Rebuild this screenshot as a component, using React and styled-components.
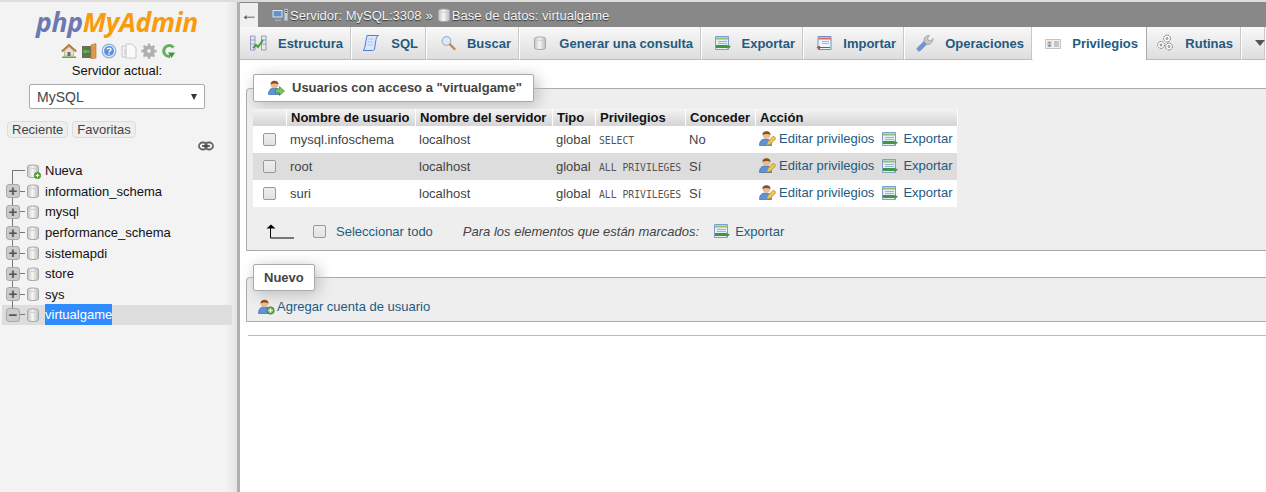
import React from "react"
import styled, { createGlobalStyle } from "styled-components"

const Global = createGlobalStyle`
  html, body {
    margin: 0;
    height: 100%;
    overflow: hidden;
    background: #fff;
  }
  body {
    font-family: "Liberation Sans", Arial, sans-serif;
    font-size: 13px;
    color: #444;
  }
`

const Page = styled.div`
  display: flex;
  height: 100vh;
  width: 100vw;
  overflow: hidden;
`

/* sidebar */

const Sidebar = styled.aside`
  box-sizing: border-box;
  flex: 0 0 240px;
  height: 100%;
  padding-top: 8px;
  background: linear-gradient(to right, #f3f3f3 0, #f3f3f3 226px, #e4e4e4 237px, #b0b0b0 237px, #b0b0b0 240px);
  border-top: 2px solid #ddd;
  display: flex;
  flex-direction: column;
`

const Logo = styled.div`
  align-self: center;
  margin-right: 6px;
  height: 25px;
  line-height: 25px;
  font-family: "Open Sans", sans-serif;
  font-style: italic;
  font-weight: 700;
  font-size: 26.5px;
  letter-spacing: -0.3px;
  color: #6c78af;

  span {
    color: #f89c0e;
  }
`

const QuickIcons = styled.div`
  display: flex;
  justify-content: center;
  gap: 4px;
  margin-top: 8px;
  margin-right: 3px;
  height: 16px;
`

const ServerLabel = styled.div`
  margin-top: 4px;
  margin-right: 6px;
  text-align: center;
  font-size: 13px;
  line-height: 16px;
  color: #111;
`

const Select = styled.div`
  box-sizing: border-box;
  display: flex;
  align-items: center;
  justify-content: space-between;
  width: 176px;
  height: 25px;
  margin: 5px 0 0 29px;
  padding: 0 7px;
  background: #fff;
  border: 1px solid #aaa;
  border-radius: 2px;
  font-size: 14px;
  color: #444;

  i {
    width: 0;
    height: 0;
    border-left: 3px solid transparent;
    border-right: 3px solid transparent;
    border-top: 6px solid #333;
  }
`

const Pills = styled.div`
  display: flex;
  gap: 4px;
  margin: 12px 0 0 7px;
`

const Pill = styled.div`
  padding: 0 4px;
  height: 15px;
  line-height: 15px;
  background: #eee;
  border: 1px solid #ddd;
  border-radius: 4px;
  font-size: 13px;
  color: #444;
`

const LinkRow = styled.div`
  display: flex;
  justify-content: flex-end;
  padding-right: 26px;
  height: 12px;
  margin-top: 3px;
`

const Tree = styled.ul`
  list-style: none;
  margin: 7.5px 0 0 2px;
  padding: 0;
  width: 230px;
`

const TreeRow = styled.li`
  position: relative;
  display: flex;
  align-items: center;
  height: 20.6px;
  background: ${(p) => (p.$active ? "#ddd" : "transparent")};

  /* vertical line of the tree */
  &::before {
    content: "";
    position: absolute;
    left: 10px;
    top: ${(p) => (p.$first ? "50%" : "0")};
    bottom: ${(p) => (p.$active ? "50%" : "0")};
    width: 1px;
    background: #777;
  }
`

const Expander = styled.div`
  position: relative;
  box-sizing: border-box;
  flex: 0 0 14px;
  width: 14px;
  height: 14px;
  margin-left: 4px;
  background: ${(p) => (p.$none ? "transparent" : "#ccc")};
  border: ${(p) => (p.$none ? "0" : "1px solid #aaa")};
  border-radius: 3px;
  display: flex;
  align-items: center;
  justify-content: center;
  color: #555;
  font-weight: 700;
  font-size: 15px;
  line-height: 10px;
`

const Elbow = styled.div`
  flex: 0 0 ${(p) => (p.$long ? "13px" : "5px")};
  height: 1px;
  background: #777;
  margin-left: ${(p) => (p.$long ? "-8px" : "0")};
`

const TreeLabel = styled.span`
  margin-left: 4px;
  font-size: 13px;
  line-height: 21px;
  color: ${(p) => (p.$active ? "#fff" : "#111")};
  background: ${(p) => (p.$active ? "#2f8cff" : "transparent")};
`

/* main area */

const Main = styled.main`
  flex: 1 1 0;
  min-width: 0;
  display: flex;
  flex-direction: column;
  border-top: 2px solid #ddd;
`

const Crumbs = styled.div`
  display: flex;
  align-items: center;
  height: 25px;
  background: #888;
  color: #f4f4f4;
  font-size: 13px;
  text-shadow: 0 1px 1px #333;
  border-top: 1px solid #888;
  box-sizing: border-box;
`

const BackButton = styled.div`
  flex: 0 0 18px;
  height: 100%;
  margin-right: 13px;
  background: #f0f0f0;
  color: #444;
  text-align: center;
  font-size: 18px;
  line-height: 22px;
  text-shadow: none;
`

const Crumb = styled.span`
  display: inline-flex;
  align-items: center;
  gap: ${(p) => p.$gap || 0}px;
  margin-right: ${(p) => p.$right || 4}px;
`

const Tabs = styled.nav`
  display: flex;
  height: 33px;
`

const Tab = styled.div`
  box-sizing: border-box;
  display: flex;
  align-items: center;
  justify-content: flex-end;
  gap: 11px;
  flex: 0 0 ${(p) => p.$w}px;
  padding-right: ${(p) => (p.$plain ? 0 : 8)}px;
  white-space: nowrap;
  background: ${(p) => (p.$active ? "#fff" : "linear-gradient(#f8f8f8, #dedede)")};
  border-right: 1px solid ${(p) => (p.$active ? "#aaa" : "#fff")};
  box-shadow: ${(p) => (p.$active ? "none" : "inset -1px 0 0 #c8c8c8")};
  border-bottom: ${(p) => (p.$active ? "0" : "1px solid #bbb")};
  color: #235a81;
  font-weight: 700;
  font-size: 13px;
`

const Content = styled.div`
  flex: 1 1 0;
  padding: 14px 0 0 6px;
  overflow: hidden;
  margin-right: -10px;
`

const Fieldset = styled.fieldset`
  margin: ${(p) => p.$top || 0}px 0 0;
  padding: ${(p) => p.$pad};
  background: #eee;
  border: 1px solid #aaa;
  border-radius: 4px 0 0 0;
  min-width: 0;
`

const Legend = styled.legend`
  box-sizing: border-box;
  display: flex;
  align-items: center;
  gap: 7px;
  height: ${(p) => p.$h || 28}px;
  padding: 0 ${(p) => p.$padRight || 11}px 1px ${(p) => p.$padLeft || 14}px;
  background: #fff;
  border: 1px solid #aaa;
  border-radius: 2px;
  box-shadow: 3px 3px 15px #bbb;
  color: #444;
  font-weight: 700;
  font-size: 13px;
`

const Table = styled.table`
  table-layout: fixed;
  border-collapse: collapse;
  width: 704px;
  font-size: 13px;
`

const Th = styled.th`
  height: 17px;
  padding: 0 0 0 4.5px;
  text-align: left;
  background: linear-gradient(#f3f3f3, #d4d4d4);
  border-right: 1px solid #fff;
  color: #111;
  font-weight: 700;
  font-size: 13px;
  line-height: 17px;
  white-space: nowrap;
  overflow: hidden;
`

const Row = styled.tr`
  height: 27px;
  background: ${(p) => (p.$even ? "#ddd" : "#fff")};
`

const Td = styled.td`
  padding: 0 0 0 4px;
  white-space: nowrap;
  overflow: hidden;
  color: #444;
`

const Priv = styled.code`
  font-family: "DejaVu Sans Mono", monospace;
  font-size: 9.75px;
  color: #555;
`

const Check = styled.input.attrs({ type: "checkbox" })`
  appearance: none;
  display: block;
  box-sizing: border-box;
  width: 13px;
  height: 13px;
  margin: 0 0 0 ${(p) => p.$left || 0}px;
  background: linear-gradient(#eee, #e2e2e2);
  border: 1px solid #999;
  border-radius: 2px;
`

const ActionLink = styled.a`
  display: inline-flex;
  align-items: center;
  gap: ${(p) => p.$iconGap || 5}px;
  margin-right: ${(p) => p.$gap || 0}px;
  color: #235a81;
  font-size: 13px;
`

const Actions = styled.div`
  display: flex;
  align-items: center;
  padding-bottom: 2px;
`

const Footer = styled.div`
  box-sizing: border-box;
  display: flex;
  align-items: center;
  height: 43px;
  padding: 5px 0 0 13px;
`

const SelectAll = styled.span`
  margin-left: 10px;
  color: #235a81;
`

const Marked = styled.em`
  margin-left: 30px;
  margin-right: 15px;
  color: #444;
`

const AddRow = styled.div`
  display: flex;
  align-items: center;
  gap: 2px;
  color: #235a81;
  font-size: 13px;
  height: 30px;
  padding-left: 5px;
`

const Rule = styled.hr`
  margin: 13px 0 0 2px;
  border: 0;
  border-top: 1px solid #bbb;
`

const Svg = styled.svg`
  flex: 0 0 auto;
  display: block;
`

/* icons */

const Db = ({ plus }) => (
  <Svg width="16" height="16" viewBox="0 0 16 16">
    <defs>
      <linearGradient id="dbg" x1="0" x2="1" y1="0" y2="0">
        <stop offset="0" stopColor="#c4c4c4" />
        <stop offset=".45" stopColor="#f6f6f6" />
        <stop offset="1" stopColor="#bdbdbd" />
      </linearGradient>
    </defs>
    <path d="M2.500 3.500C2.500 1.500 13.500 1.500 13.500 3.500v9.500c0 2-11 2-11 0z" fill="url(#dbg)" stroke="#a8a8a8" />
    <path d="M3 4.500c1.500 1.200 8.500 1.200 10 0" fill="none" stroke="#cfcfcf" />
    {plus && <circle cx="12.500" cy="12.500" r="3.200" fill="#5aa53a" stroke="#3f7f25" strokeWidth=".6" />}
    {plus && <path d="M12.500 10.800v3.400M10.800 12.500h3.400" stroke="#fff" strokeWidth="1.100" />}
  </Svg>
)

const Home = () => (
  <Svg width="16" height="16" viewBox="0 0 16 16">
    <path d="M3.500 8L8 4l4.500 4v5h-9z" fill="#e9e2d2" stroke="#a89a80" strokeWidth=".6" />
    <path d="M.8 8.500L8 2l7.200 6.500" fill="none" stroke="#b5763a" strokeWidth="2" />
    <rect x="6.500" y="9" width="3" height="4" fill="#6d6a63" />
    <path d="M1 13.500h14V15H1z" fill="#66a84a" />
  </Svg>
)

const Door = () => (
  <Svg width="16" height="16" viewBox="0 0 16 16">
    <path d="M1 3h9v12H1z" fill="#6b6b5e" />
    <path d="M10 2l5-1.500V15l-5 1z" fill="#dd9a4f" stroke="#b3722d" strokeWidth=".6" />
    <path d="M1 8.500l4-3.500v2h4v3H5v2z" fill="#58b848" stroke="#2e7f27" strokeWidth=".5" />
  </Svg>
)

const Help = () => (
  <Svg width="16" height="16" viewBox="0 0 16 16">
    <circle cx="8" cy="8" r="6.800" fill="#dfe9f7" stroke="#8fb0dc" strokeWidth="1.200" />
    <circle cx="8" cy="8" r="4.900" fill="#5d8fd3" />
    <path d="M6 6.500C6.300 4.600 10 4.700 10 6.500 10 8 8 7.700 8 9.300" fill="none" stroke="#fff" strokeWidth="1.400" />
    <path d="M7.300 10.300h1.400v1.400H7.300z" fill="#fff" />
  </Svg>
)

const Docs = () => (
  <Svg width="16" height="16" viewBox="0 0 16 16">
    <path d="M1 3h7v11H1z" fill="#f2f2f2" stroke="#c8c8c8" />
    <path d="M5 1h6l4 4v10H5z" fill="#fafafa" stroke="#c8c8c8" />
    <path d="M3 6h3v6H3z" fill="#d8d8d8" />
  </Svg>
)

const Gear = ({ size = 16, color = "#b0b0b0" }) => (
  <Svg width={size} height={size} viewBox="0 0 16 16">
    <path
      d="M7 .5h2l.4 2 1.600.700 1.700-1.100 1.400 1.400-1.100 1.700.700 1.600 2 .4v2l-2 .4-.700 1.600 1.100 1.700-1.400 1.400-1.700-1.100-1.600.700-.4 2H7l-.4-2-1.600-.700-1.700 1.100-1.400-1.400 1.100-1.700L2.300 9.400l-2-.4V7l2-.4.700-1.600-1.100-1.700 1.400-1.400L5 3.200l1.600-.7z"
      fill={color}
    />
    <circle cx="8" cy="8" r="2.400" fill="#eee" stroke="#888" strokeWidth=".5" />
  </Svg>
)

const Reload = () => (
  <Svg width="16" height="16" viewBox="0 0 16 16">
    <path d="M12.500 4.500A5.500 5.500 0 1 0 9 13.500" fill="none" stroke="#67ad5f" strokeWidth="3" />
    <path d="M7 9.500h7l-3.500 5.500z" fill="#3f9640" />
  </Svg>
)

const LinkIcon = () => (
  <Svg width="16" height="10" viewBox="0 0 16 10">
    <rect x="1" y="1.500" width="8" height="7" rx="3.500" fill="none" stroke="#666" strokeWidth="1.800" />
    <rect x="7" y="1.500" width="8" height="7" rx="3.500" fill="none" stroke="#666" strokeWidth="1.800" />
    <path d="M4 5h8" stroke="#444" strokeWidth="1.600" />
  </Svg>
)

const Server = () => (
  <Svg width="18" height="16" viewBox="0 0 18 16">
    <path d="M1 2.500h11v8.500H1z" fill="#dfe6ee" stroke="#7a8490" />
    <path d="M2.500 4h8v5.500h-8z" fill="#5c93d0" />
    <path d="M4 12.500h6V14H4z" fill="#a5acb4" />
    <path d="M13 1.500h4V14h-4z" fill="#c9ced4" stroke="#7a8490" strokeWidth=".7" />
    <path d="M14 3.500h2M14 5.500h2" stroke="#555" />
  </Svg>
)

const Structure = () => (
  <Svg width="17" height="16" viewBox="0 0 17 16">
    <path d="M.5 1h4.500v14H.5zM11.500 1H16v14h-4.500z" fill="#e6e9f2" stroke="#7d88b4" strokeWidth=".8" />
    <path d="M.5 5H5M.5 9H5M11.500 5H16M11.500 9H16" stroke="#7d88b4" strokeWidth=".8" />
    <path d="M3 13l3-3 2 2 5-7" fill="none" stroke="#4f9a3c" strokeWidth="2" />
  </Svg>
)

const Scroll = () => (
  <Svg width="18" height="18" viewBox="0 0 18 18">
    <path d="M5 1.500h11.500c-1.500 1-2.200 2-2.500 4L12.500 15c-.3 1.200-1 1.500-2 1.500H1c1.200-.8 1.700-2 2-4.500z" fill="#dbe7fb" stroke="#4f7fd0" />
    <path d="M6.500 5h5M6 8h5M5.500 11h5" stroke="#a8c3ee" />
  </Svg>
)

const Search = () => (
  <Svg width="16" height="16" viewBox="0 0 16 16">
    <circle cx="6.500" cy="6" r="4.300" fill="#dbe9fb" stroke="#a7b6c8" strokeWidth="1.300" />
    <path d="M10 9.500l4.500 4.500" stroke="#c08a4a" strokeWidth="2.400" strokeLinecap="round" />
  </Svg>
)

const Sheet = () => (
  <Svg width="16" height="16" viewBox="0 0 16 16">
    <path d="M.5 1.500h13v13H.5z" fill="#e6edf7" stroke="#7f9ecb" />
    <path d="M1 3.500h12" stroke="#8cc177" strokeWidth="2" />
    <path d="M3 6.500h9M3 8.500h9" stroke="#9db2d2" />
    <path d="M1 10.800h11.500M1 12.300h13" stroke="#3f9640" strokeWidth="1.500" />
    <path d="M12.500 9.500l3.500 2.300-3.500 2.200z" fill="#3f9640" />
  </Svg>
)

const Import = () => (
  <Svg width="16" height="16" viewBox="0 0 16 16">
    <path d="M2 1.500h13v13H2z" fill="#eef3fa" stroke="#6f8fc0" />
    <path d="M2.500 3.500H15" stroke="#d66" strokeWidth="2" />
    <path d="M6 6.500h7M6 8.500h7" stroke="#a3b7d4" />
    <path d="M14 12H4v-1.500L.5 12.500 4 14.500V13h10z" fill="#c63b3b" />
  </Svg>
)

const Wrench = () => (
  <Svg width="18" height="18" viewBox="0 0 18 18">
    <path d="M2 16.500c-1-.8-1.300-1.800-.6-2.600L8 7.500l2.600 2.800-6.300 6.300c-.7.600-1.600.6-2.300-.1z" fill="#6f97d8" stroke="#4b73b5" strokeWidth=".6" />
    <path d="M8 7.500C7.500 4 10 1 13.500 1.500L11.500 4l1 2.500 2.500.3L17 4.500c.5 3.500-3 6.500-6.400 5.800z" fill="#c9c9c9" stroke="#8a8a8a" strokeWidth=".6" />
  </Svg>
)

const Card = () => (
  <Svg width="16" height="16" viewBox="0 0 16 16">
    <path d="M.5 3.500h15v9H.5z" fill="#f1f1f1" stroke="#c4c4c4" />
    <path d="M2 5h5v5.500H2z" fill="#c9d8ea" />
    <circle cx="4.500" cy="7" r="1.400" fill="#d39a62" />
    <path d="M3 10.500c0-2 3-2 3 0z" fill="#3e74c0" />
    <path d="M9 6h5M9 8h5M9 10h5" stroke="#999" />
  </Svg>
)

const Gears = () => (
  <Svg width="18" height="18" viewBox="0 0 18 18">
    <g fill="#fff" stroke="#666" strokeWidth="1" strokeDasharray="1.500 .8">
      <circle cx="11" cy="4.500" r="3.400" />
      <circle cx="5" cy="11" r="3.400" />
      <circle cx="13" cy="12.500" r="3.400" />
    </g>
    <g fill="none" stroke="#666" strokeWidth=".8">
      <circle cx="11" cy="4.500" r="1" />
      <circle cx="5" cy="11" r="1" />
      <circle cx="13" cy="12.500" r="1" />
    </g>
  </Svg>
)

const Person = ({ badge }) => (
  <Svg width="17" height="17" viewBox="0 0 17 17">
    <path d="M.5 15.500c0-4.500 2-6.500 6-6.500s6 2 6 6.500z" fill="#5b94de" stroke="#2e5d9f" strokeWidth=".6" />
    <circle cx="6.500" cy="5.500" r="3.800" fill="#e8bd92" />
    <path d="M2.500 5.500C2 .5 11 .3 10.500 5.500 8.500 4 5 4 2.500 5.500z" fill="#8c4f22" />
    {badge === "arrow" && <path d="M7.500 10h4V7.500L16.500 12l-5 4.500V14h-4z" fill="#7cc265" stroke="#3b8026" strokeWidth=".6" />}
    {badge === "plus" && <circle cx="12.500" cy="12.500" r="3.800" fill="#5aa53a" stroke="#3f7f25" strokeWidth=".6" />}
    {badge === "plus" && <path d="M12.500 10.300v4.400M10.300 12.500h4.400" stroke="#fff" strokeWidth="1.300" />}
  </Svg>
)

const EditUser = () => (
  <Svg width="17" height="17" viewBox="0 0 17 17">
    <path d="M.5 15.500c0-4.500 2-6.500 6-6.500s6 2 6 6.500z" fill="#5b94de" stroke="#2e5d9f" strokeWidth=".6" />
    <circle cx="7.500" cy="5" r="3.800" fill="#e8bd92" />
    <path d="M3.500 5C3 0 12 -.2 11.500 5 9.500 3.500 6 3.500 3.500 5z" fill="#8c4f22" />
    <path d="M7.500 15.500l1-3.500 6-6 2.500 2.500-6 6z" fill="#f0c64e" stroke="#a67c20" strokeWidth=".7" />
  </Svg>
)

const UpArrow = () => (
  <Svg width="28" height="15" viewBox="0 0 28 15">
    <path d="M.5 4.500L5 .5l4.500 4z" fill="#000" />
    <path d="M4.500 4v10H28" fill="none" stroke="#000" />
  </Svg>
)

const TABS = [
  { label: "Estructura", w: 112, icon: <Structure /> },
  { label: "SQL", w: 75, icon: <Scroll /> },
  { label: "Buscar", w: 93, icon: <Search /> },
  { label: "Generar una consulta", w: 182, icon: <Db /> },
  { label: "Exportar", w: 102, icon: <Sheet /> },
  { label: "Importar", w: 101, icon: <Import /> },
  { label: "Operaciones", w: 128, icon: <Wrench /> },
  { label: "Privilegios", w: 114, icon: <Card />, active: true },
  { label: "Rutinas", w: 95, icon: <Gears /> },
]

const DATABASES = ["information_schema", "mysql", "performance_schema", "sistemapdi", "store", "sys"]

const USERS = [
  { name: "mysql.infoschema", priv: "SELECT", grant: "No" },
  { name: "root", priv: "ALL PRIVILEGES", grant: "Sí" },
  { name: "suri", priv: "ALL PRIVILEGES", grant: "Sí" },
]

export default function App() {
  return (
    <Page>
      <Global />
      <Sidebar>
        <Logo>php<span>MyAdmin</span></Logo>
        <QuickIcons>
          <Home />
          <Door />
          <Help />
          <Docs />
          <Gear />
          <Reload />
        </QuickIcons>
        <ServerLabel>Servidor actual:</ServerLabel>
        <Select>MySQL<i /></Select>
        <Pills>
          <Pill>Reciente</Pill>
          <Pill>Favoritas</Pill>
        </Pills>
        <LinkRow><LinkIcon /></LinkRow>
        <Tree>
          <TreeRow $first>
            <Expander $none />
            <Elbow $long />
            <Db plus />
            <TreeLabel>Nueva</TreeLabel>
          </TreeRow>
          {DATABASES.map((db) => (
            <TreeRow key={db}>
              <Expander>+</Expander>
              <Elbow />
              <Db />
              <TreeLabel>{db}</TreeLabel>
            </TreeRow>
          ))}
          <TreeRow $active>
            <Expander>−</Expander>
            <Elbow />
            <Db />
            <TreeLabel $active>virtualgame</TreeLabel>
          </TreeRow>
        </Tree>
      </Sidebar>

      <Main>
        <Crumbs>
          <BackButton>←</BackButton>
          <Crumb $gap={1}><Server />Servidor: MySQL:3308</Crumb>
          <Crumb $right={3}>»</Crumb>
          <Crumb><Db />Base de datos: virtualgame</Crumb>
        </Crumbs>
        <Tabs>
          {TABS.map((t) => (
            <Tab key={t.label} $w={t.w} $active={t.active}>
              {t.icon}
              {t.label}
            </Tab>
          ))}
          <Tab $w={24} $plain>
            <svg width="10" height="6" viewBox="0 0 10 6"><path d="M0 0h10L5 6z" fill="#555" /></svg>
          </Tab>
        </Tabs>

        <Content>
          <Fieldset $pad="7px 6px 0">
            <Legend>
              <Person badge="arrow" />
              Usuarios con acceso a "virtualgame"
            </Legend>
            <Table>
              <colgroup>
                <col width="33" />
                <col width="129" />
                <col width="137" />
                <col width="43" />
                <col width="90" />
                <col width="70" />
                <col width="202" />
              </colgroup>
              <thead>
                <tr>
                  <Th />
                  <Th>Nombre de usuario</Th>
                  <Th>Nombre del servidor</Th>
                  <Th>Tipo</Th>
                  <Th>Privilegios</Th>
                  <Th>Conceder</Th>
                  <Th>Acción</Th>
                </tr>
              </thead>
              <tbody>
                {USERS.map((u, i) => (
                  <Row key={u.name} $even={i % 2 === 1}>
                    <Td><Check $left={6} /></Td>
                    <Td>{u.name}</Td>
                    <Td>localhost</Td>
                    <Td>global</Td>
                    <Td><Priv>{u.priv}</Priv></Td>
                    <Td>{u.grant}</Td>
                    <Td>
                      <Actions>
                        <ActionLink $gap={8} $iconGap={3}><EditUser />Editar privilegios</ActionLink>
                        <ActionLink><Sheet />Exportar</ActionLink>
                      </Actions>
                    </Td>
                  </Row>
                ))}
              </tbody>
            </Table>
            <Footer>
              <UpArrow />
              <Check $left={19} />
              <SelectAll>Seleccionar todo</SelectAll>
              <Marked>Para los elementos que están marcados:</Marked>
              <ActionLink><Sheet />Exportar</ActionLink>
            </Footer>
          </Fieldset>

          <Fieldset $top={13} $pad="0 6px">
            <Legend $h={27} $padLeft={10} $padRight={10}>Nuevo</Legend>
            <AddRow><Person badge="plus" />Agregar cuenta de usuario</AddRow>
          </Fieldset>
          <Rule />
        </Content>
      </Main>
    </Page>
  )
}
